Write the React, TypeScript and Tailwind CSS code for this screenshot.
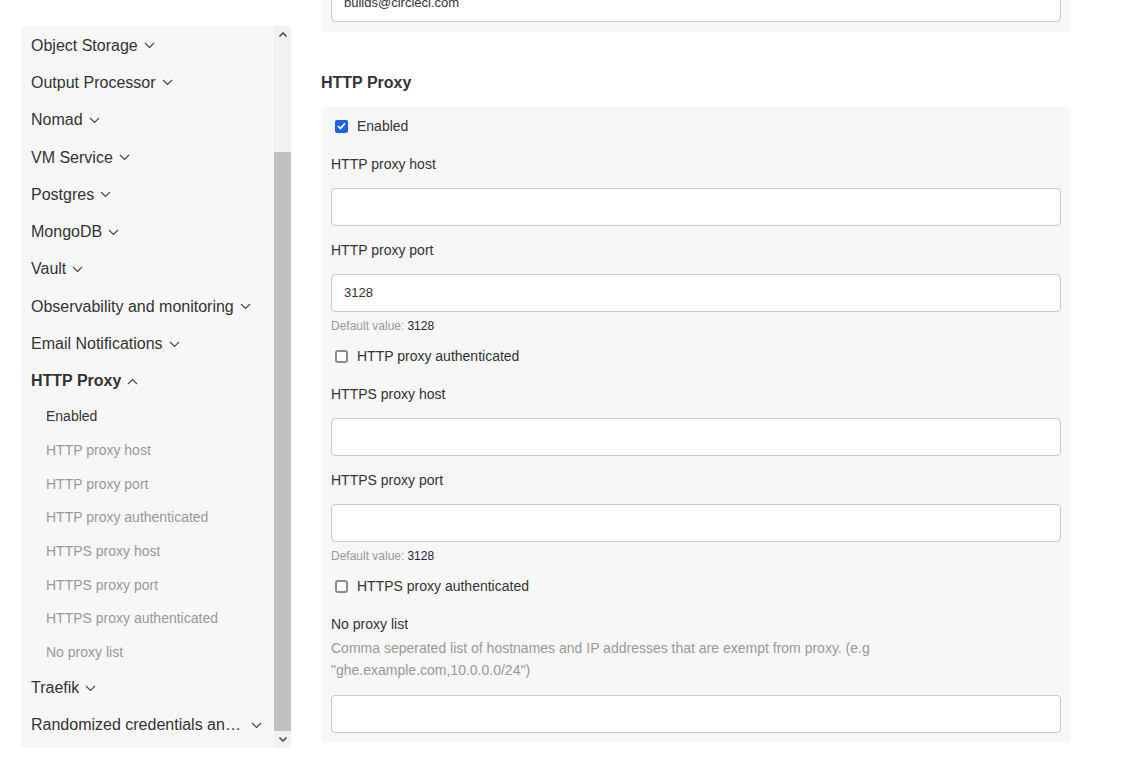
import React from "react";

const font = { fontFamily: '"Liberation Sans", Arial, sans-serif' };

const Chevron = ({ up = false }: { up?: boolean }) => (
  <svg width="11" height="7" viewBox="0 0 11 7" className="shrink-0 ml-[6px]">
    <path
      d={up ? "M1 6 L5.5 1.5 L10 6" : "M1 1 L5.5 5.5 L10 1"}
      fill="none"
      stroke="#444"
      strokeWidth="1.1"
    />
  </svg>
);

const SideItem = ({ label, open = false, wide = false }: { label: string; open?: boolean; wide?: boolean }) => (
  <div className={`h-[37.3px] flex items-center pl-[10px] pr-[12px] text-[16px] ${open ? "font-bold" : ""} text-[#333]`}>
    <span className={wide ? "truncate min-w-0 flex-1" : "truncate min-w-0"}>{label}</span>
    <Chevron up={open} />
  </div>
);

const SubItem = ({ label, active = false }: { label: string; active?: boolean }) => (
  <div className={`h-[33.7px] flex items-center pl-[25px] text-[14px] ${active ? "text-[#333]" : "text-[#999]"}`}>
    {label}
  </div>
);

const Input = ({ value = "" }: { value?: string }) => (
  <div className="h-[38px] bg-white border border-[#c8c8c8] rounded-[4px] flex items-center px-[12px] text-[13px] text-[#333]">
    {value}
  </div>
);

const Check = ({ label, checked = false }: { label: string; checked?: boolean }) => (
  <div className="h-[20px] flex items-center text-[14px] text-[#333]">
    {checked ? (
      <span className="ml-[4px] w-[13px] h-[13px] rounded-[2px] bg-[#1a62e0] flex items-center justify-center">
        <svg width="9" height="8" viewBox="0 0 9 8">
          <path d="M1 4.2 L3.4 6.5 L8 1.3" fill="none" stroke="white" strokeWidth="1.8" />
        </svg>
      </span>
    ) : (
      <span className="ml-[4px] w-[13px] h-[13px] rounded-[3px] border-2 border-[#8b8a94] bg-white" />
    )}
    <span className="ml-[9px]">{label}</span>
  </div>
);

const Label = ({ text, className = "" }: { text: string; className?: string }) => (
  <div className={`h-[20px] flex items-center text-[14px] text-[#333] ${className}`}>{text}</div>
);

const DefaultValue = ({ className = "" }: { className?: string }) => (
  <div className={`h-[16px] flex items-center text-[12px] ${className}`}>
    <span className="text-[#999]">Default value:</span>
    <span className="ml-[3px] text-[#1b2440]">3128</span>
  </div>
);

export default function App() {
  const groups = [
    "Object Storage",
    "Output Processor",
    "Nomad",
    "VM Service",
    "Postgres",
    "MongoDB",
    "Vault",
    "Observability and monitoring",
    "Email Notifications",
  ];
  const subs = [
    "Enabled",
    "HTTP proxy host",
    "HTTP proxy port",
    "HTTP proxy authenticated",
    "HTTPS proxy host",
    "HTTPS proxy port",
    "HTTPS proxy authenticated",
    "No proxy list",
  ];

  return (
    <div style={font} className="w-[1131px] h-[762px] overflow-hidden bg-white flex pl-[21px]">
      {/* Sidebar */}
      <div className="mt-[26px] w-[270px] h-[722px] bg-[#f7f7f7] rounded-[4px] flex overflow-hidden shrink-0">
        <div className="flex-1 min-w-0 pt-[1px]">
          {groups.map((g) => (
            <SideItem key={g} label={g} />
          ))}
          <SideItem label="HTTP Proxy" open />
          {subs.map((s, i) => (
            <SubItem key={s} label={s} active={i === 0} />
          ))}
          <SideItem label="Traefik" />
          <SideItem label="Randomized credentials and keys" wide />
        </div>
        {/* scrollbar */}
        <div className="w-[17px] bg-[#f1f1f1] flex flex-col">
          <div className="h-[17px] flex items-center justify-center">
            <svg width="8" height="5" viewBox="0 0 8 5">
              <path d="M0.5 4.5 L4 1 L7.5 4.5" fill="none" stroke="#505050" strokeWidth="1.6" />
            </svg>
          </div>
          <div className="h-[109px]" />
          <div className="flex-1 bg-[#c1c1c1]" />
          <div className="h-[17px] flex items-center justify-center">
            <svg width="8" height="5" viewBox="0 0 8 5">
              <path d="M0.5 0.5 L4 4 L7.5 0.5" fill="none" stroke="#505050" strokeWidth="1.6" />
            </svg>
          </div>
        </div>
      </div>

      {/* Main */}
      <div className="ml-[30px] w-[750px] shrink-0">
        <div className="mt-[-26px] bg-[#f7f7f7] rounded-[4px] p-[10px]">
          <Input value="builds@circleci.com" />
        </div>

        <h2 className="mt-[41px] h-[20px] flex items-center text-[16px] font-bold text-[#333]">HTTP Proxy</h2>

        <div className="mt-[14px] bg-[#f7f7f7] rounded-[4px] px-[10px] pt-[9px] pb-[9px]">
          <Check label="Enabled" checked />
          <Label text="HTTP proxy host" className="mt-[18px]" />
          <div className="mt-[14px]">
            <Input />
          </div>
          <Label text="HTTP proxy port" className="mt-[14px]" />
          <div className="mt-[14px]">
            <Input value="3128" />
          </div>
          <DefaultValue className="mt-[6px]" />
          <div className="mt-[12px]">
            <Check label="HTTP proxy authenticated" />
          </div>
          <Label text="HTTPS proxy host" className="mt-[18px]" />
          <div className="mt-[14px]">
            <Input />
          </div>
          <Label text="HTTPS proxy port" className="mt-[14px]" />
          <div className="mt-[14px]">
            <Input />
          </div>
          <DefaultValue className="mt-[6px]" />
          <div className="mt-[12px]">
            <Check label="HTTPS proxy authenticated" />
          </div>
          <Label text="No proxy list" className="mt-[18px]" />
          <p className="mt-[3px] text-[14px] leading-[22px] text-[#999] w-[560px]">
            Comma seperated list of hostnames and IP addresses that are exempt from proxy. (e.g
            "ghe.example.com,10.0.0.0/24")
          </p>
          <div className="mt-[14px]">
            <Input />
          </div>
        </div>
      </div>
    </div>
  );
}
